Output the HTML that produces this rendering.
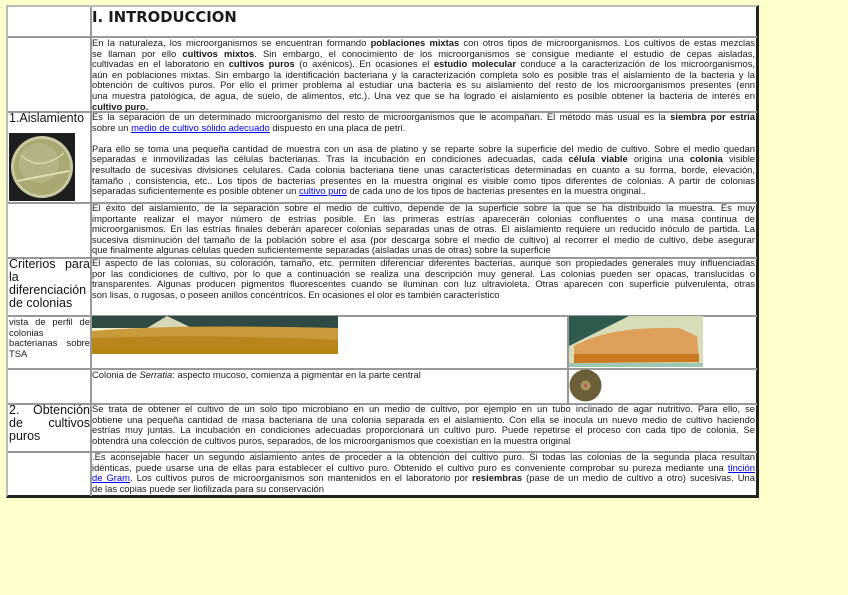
<!DOCTYPE html>
<html><head><meta charset="utf-8">
<style>
body{margin:0;background:#ffffcc;width:848px;height:595px;overflow:hidden;font-family:"Liberation Sans",sans-serif;color:#1a1a1a}
#t{position:absolute;left:6px;top:5px;width:748px;height:488px;background:#fff;border-style:solid;border-width:2px 3px 3px 2px;border-color:#bbb #222 #222 #bbb}
.h{position:absolute;left:8px;width:749px;height:2px;background:#999}
.v{position:absolute;width:2px;background:#999}
.c{position:absolute;font-size:9.4px;line-height:10.6px}
.c span{display:block;text-align:justify;text-align-last:justify;height:10.6px;white-space:nowrap}
.c span.l{text-align-last:left}
a{color:#00e;text-decoration:underline}
.lab{position:absolute;left:9px;width:81px;font-family:"Liberation Sans",sans-serif;font-size:12.5px;line-height:13px;color:#111}
.lab span{display:block;text-align:justify;text-align-last:justify;white-space:nowrap;height:13px}
.lab span.l{text-align-last:left}
</style></head><body>
<div id="t"></div>
<div class="h" style="top:36px"></div>
<div class="h" style="top:111px"></div>
<div class="h" style="top:202px"></div>
<div class="h" style="top:257px"></div>
<div class="h" style="top:315px"></div>
<div class="h" style="top:368px"></div>
<div class="h" style="top:403px"></div>
<div class="h" style="top:451px"></div>
<div class="v" style="left:90px;top:7px;height:489px"></div>
<div class="v" style="left:567px;top:315px;height:89px"></div>

<div style="position:absolute;left:92px;top:9px;font-size:14.8px;font-weight:bold;font-family:'DejaVu Sans',sans-serif">I. INTRODUCCION</div>

<div class="c" style="left:92px;top:38px;width:663px">
<span>En la naturaleza, los microorganismos se encuentran formando <b>poblaciones mixtas</b> con otros tipos de microorganismos. Los cultivos de estas mezclas</span>
<span>se llaman por ello <b>cultivos mixtos</b>. Sin embargo, el conocimiento de los microorganismos se consigue mediante el estudio de cepas aisladas,</span>
<span>cultivadas en el laboratorio en <b>cultivos puros</b> (o axénicos). En ocasiones el <b>estudio molecular</b> conduce a la caracterización de los microorganismos,</span>
<span>aún en poblaciones mixtas. Sin embargo la identificación bacteriana y la caracterización completa solo es posible tras el aislamiento de la bacteria y la</span>
<span>obtención de cultivos puros. Por ello el primer problema al estudiar una bacteria es su aislamiento del resto de los microorganismos presentes (enn</span>
<span>una muestra patológica, de agua, de suelo, de alimentos, etc.). Una vez que se ha logrado el aislamiento es posible obtener la bacteria de interés en</span>
<span class="l"><b>cultivo puro.</b></span>
</div>

<div class="lab" style="top:112px;width:84px">1.Aislamiento</div>
<svg style="position:absolute;left:9px;top:133px" width="66" height="68"><rect width="66" height="68" fill="#1e1e1e"/><circle cx="33" cy="34" r="31" fill="#c9c8a0"/><circle cx="33" cy="34" r="28" fill="#a9a872"/><circle cx="30" cy="30" r="20" fill="#b8b88a" opacity=".7"/><path d="M8 48 L60 38" stroke="#e0dfb0" stroke-width="2"/><path d="M12 22 Q30 40 55 20" stroke="#d8d7a8" stroke-width="1.5" fill="none"/></svg>

<div class="c" style="left:92px;top:112px;width:663px">
<span>Es la separación de un determinado microorganismo del resto de microorganismos que le acompañan. El método más usual es la <b>siembra por estría</b></span>
<span class="l">sobre un <a>medio de cultivo sólido adecuado</a> dispuesto en una placa de petri.</span>
<span class="l"></span>
<span>Para ello se toma una pequeña cantidad de muestra con un asa de platino y se reparte sobre la superficie del medio de cultivo. Sobre el medio quedan</span>
<span>separadas e inmovilizadas las células bacterianas. Tras la incubación en condiciones adecuadas, cada <b>célula viable</b> origina una <b>colonia</b> visible</span>
<span>resultado de sucesivas divisiones celulares. Cada colonia bacteriana tiene unas características determinadas en cuanto a su forma, borde, elevación,</span>
<span>tamaño , consistencia, etc.. Los tipos de bacterias presentes en la muestra original es visible como tipos diferentes de colonias. A partir de colonias</span>
<span class="l">separadas suficientemente es posible obtener un <a>cultivo puro</a> de cada uno de los tipos de bacterias presentes en la muestra original..</span>
</div>

<div class="c" style="left:92px;top:203px;width:663px">
<span>El éxito del aislamiento, de la separación sobre el medio de cultivo, depende de la superficie sobre la que se ha distribuido la muestra. Es muy</span>
<span>importante realizar el mayor número de estrías posible. En las primeras estrías aparecerán colonias confluentes o una masa continua de</span>
<span>microorganismos. En las estrías finales deberán aparecer colonias separadas unas de otras. El aislamiento requiere un reducido inóculo de partida. La</span>
<span>sucesiva disminución del tamaño de la población sobre el asa (por descarga sobre el medio de cultivo) al recorrer el medio de cultivo, debe asegurar</span>
<span class="l">que finalmente algunas células queden suficientemente separadas (aisladas unas de otras) sobre la superficie</span>
</div>

<div class="lab" style="top:258px"><span>Criterios para</span><span class="l">la</span><span class="l">diferenciación</span><span class="l">de colonias</span></div>
<div class="c" style="left:92px;top:258px;width:663px">
<span>El aspecto de las colonias, su coloración, tamaño, etc. permiten diferenciar diferentes bacterias, aunque son propiedades generales muy influenciadas</span>
<span>por las condiciones de cultivo, por lo que a continuación se realiza una descripción muy general. Las colonias pueden ser opacas, translucidas o</span>
<span>transparentes. Algunas producen pigmentos fluorescentes cuando se iluminan con luz ultravioleta. Otras aparecen con superficie pulverulenta, otras</span>
<span class="l">son lisas, o rugosas, o poseen anillos concéntricos. En ocasiones el olor es también característico</span>
</div>

<div class="c" style="left:9px;top:317px;width:81px"><span>vista de perfil de</span><span class="l">colonias</span><span>bacterianas sobre</span><span class="l">TSA</span></div>
<svg style="position:absolute;left:92px;top:316px" width="246" height="38"><rect width="246" height="38" fill="#f1efc8"/><rect y="0" width="246" height="12" fill="#2f4a44"/><path d="M55 12 L75 0 L100 12Z" fill="#d8d6b8"/><path d="M0 15 Q80 8 246 12 L246 38 L0 38Z" fill="#c99a3a"/><path d="M0 22 Q120 18 246 24 L246 38 L0 38Z" fill="#b8861c"/><rect y="32" width="246" height="6" fill="#b58410"/></svg>
<svg style="position:absolute;left:569px;top:316px" width="134" height="51"><rect width="134" height="51" fill="#d9dcb9"/><path d="M0 0 L60 0 L0 30Z" fill="#2f5a50"/><path d="M5 30 Q40 10 110 12 L128 20 L130 44 L5 46Z" fill="#dca05a"/><path d="M5 38 L130 38 L130 46 L5 47Z" fill="#c97a20"/><rect y="47" width="134" height="4" fill="#9fc8b4"/></svg>

<div class="c" style="left:92px;top:370px;width:470px"><span class="l">Colonia de <i>Serratia</i>: aspecto mucoso, comienza a pigmentar en la parte central</span></div>
<svg style="position:absolute;left:569px;top:369px" width="33" height="33"><circle cx="16.5" cy="16.5" r="16" fill="#6b5f3a"/><circle cx="16.5" cy="16.5" r="5" fill="#a8965c"/><circle cx="16.5" cy="16.5" r="1.5" fill="#c44"/></svg>

<div class="lab" style="top:404px"><span>2. Obtención</span><span>de cultivos</span><span class="l">puros</span></div>
<div class="c" style="left:92px;top:404px;width:663px">
<span>Se trata de obtener el cultivo de un solo tipo microbiano en un medio de cultivo, por ejemplo en un tubo inclinado de agar nutritivo. Para ello, se</span>
<span>obtiene una pequeña cantidad de masa bacteriana de una colonia separada en el aislamiento. Con ella se inocula un nuevo medio de cultivo haciendo</span>
<span>estrías muy juntas. La incubación en condiciones adecuadas proporcionará un cultivo puro. Puede repetirse el proceso con cada tipo de colonia. Se</span>
<span class="l">obtendrá una colección de cultivos puros, separados, de los microorganismos que coexistían en la muestra original</span>
</div>

<div class="c" style="left:92px;top:452px;width:663px">
<span>.Es aconsejable hacer un segundo aislamiento antes de proceder a la obtención del cultivo puro. Si todas las colonias de la segunda placa resultan</span>
<span>idénticas, puede usarse una de ellas para establecer el cultivo puro. Obtenido el cultivo puro es conveniente comprobar su pureza mediante una <a>tinción</a></span>
<span><a>de Gram</a>. Los cultivos puros de microorganismos son mantenidos en el laboratorio por <b>resiembras</b> (pase de un medio de cultivo a otro) sucesivas. Una</span>
<span class="l">de las copias puede ser liofilizada para su conservación</span>
</div>
</body></html>
